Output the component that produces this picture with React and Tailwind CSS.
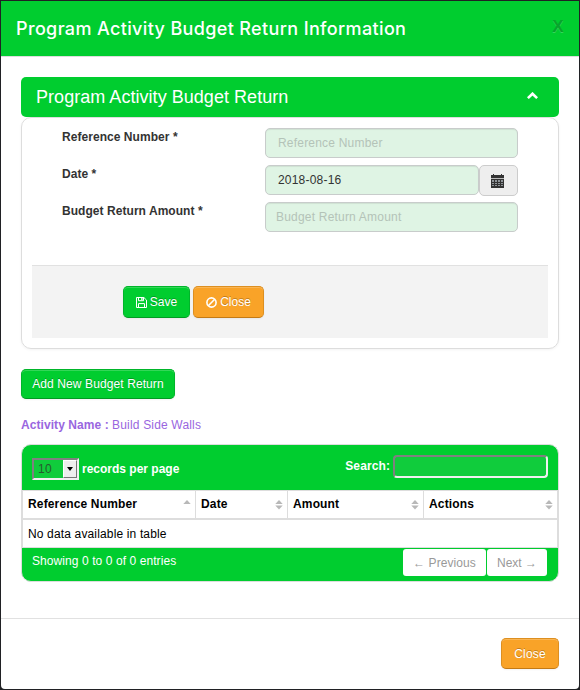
import React from "react";

const btn =
  "flex items-center justify-center rounded-[5px] border text-[12px] whitespace-nowrap text-white [text-shadow:0_-1px_0_rgba(0,0,0,0.25)] shadow-[inset_0_1px_0_rgba(255,255,255,0.2),0_1px_2px_rgba(0,0,0,0.05)]";
const green = "bg-[#00cd2f] border-[#00b52a] border-b-[#009a22]";
const orange = "bg-[#f9a328] border-[#dd8f20] border-b-[#c47a14]";
const field =
  "h-[30px] rounded-[5px] border border-[#c8cccb] bg-[#dff4e4] text-[12px] tracking-[0.2px] text-[#333] placeholder:text-[#b4c3b8] outline-none shadow-[inset_0_1px_1px_rgba(0,0,0,0.075)]";

function SaveIcon() {
  return (
    <svg className="mr-[3px] h-[11px] w-[11px]" viewBox="0 0 11 11" fill="none" stroke="currentColor">
      <path d="M.5 .5h7.4l2.6 2.6v7.4H.5z" />
      <path d="M2.5 .5v3.2h5V.5M2.5 10.5V6.6h6v3.9" />
      <path d="M5.9 1v2" strokeWidth="1.4" />
    </svg>
  );
}

function BanIcon() {
  return (
    <svg className="mr-[3px] h-[11px] w-[11px]" viewBox="0 0 11 11" fill="none" stroke="currentColor" strokeWidth="1.6">
      <circle cx="5.5" cy="5.5" r="4.6" />
      <path d="M2.3 8.7l6.4-6.4" />
    </svg>
  );
}

function CalendarIcon() {
  return (
    <svg className="mr-[2px] h-[14px] w-[13px]" viewBox="0 0 13 14" shapeRendering="crispEdges">
      <path fill="#333" d="M2 0h1v1h-1zM10 0h1v1h-1zM0 1h13v3H0z" />
      <path fill="#bbb" d="M0 4h13v1H0z" />
      <path fill="#333" d="M0 5h13v9H0z" />
      {[6, 9, 11].map((y, i) =>
        [1, 4, 7, 10].map((x) => (
          <rect key={`${x}-${y}`} x={x} y={y} width="2" height={i === 0 ? 2 : 1} fill="#8f9499" />
        ))
      )}
    </svg>
  );
}

function SortIcon({ up }) {
  return (
    <svg className="h-[10px] w-[8px] shrink-0" viewBox="0 0 8 10" fill="#b8b8b8">
      <path d="M4 0l3.7 4H.3z" />
      {!up && <path d="M.3 5.5h7.4L4 9.5z" />}
    </svg>
  );
}

function Row({ label, children }) {
  return (
    <div className="flex h-[37px]">
      <label className="w-[203px] pt-px text-[12px] leading-[16px] font-bold tracking-[0.05px] text-[#333]">{label}</label>
      {children}
    </div>
  );
}

function Head({ label, width, up, last }) {
  return (
    <div className={`flex items-center justify-between pl-[5px] ${width} ${last ? "pr-[4px]" : "border-r border-[#ddd] pr-[4px]"}`}>
      <span className="-mt-px tracking-[0.15px]">{label}</span>
      <SortIcon up={up} />
    </div>
  );
}

export default function App() {
  return (
    <div className="h-[690px] w-[580px] overflow-hidden border border-[#202124] bg-[#202124] font-['Liberation_Sans',Arial,sans-serif] text-[12px]">
      <div className="h-[688px] w-[578px] rounded-b-[4px] bg-white">
        <header className="flex h-[56px] justify-between border-b border-[#ddd] bg-[#00cd2f] pr-[15px] pl-[15px]">
          <h1 className="pt-[15px] font-['Inter',sans-serif] text-[18px] leading-[26px] font-medium tracking-[0.36px] whitespace-nowrap text-white">
            Program Activity Budget Return Information
          </h1>
          <button className="h-[20px] w-[12px] pt-[15px] text-center text-[17px] leading-[21px] font-bold text-[#07a52c] [text-shadow:0_1px_0_#33d65a]">
            X
          </button>
        </header>

        <main className="px-[20px] pt-[20px]">
          <div className="flex h-[40px] items-center justify-between rounded-[5px] bg-[#00cd2f] pr-[21px] pl-[15px]">
            <h2 className="text-[18px] tracking-[0.04px] whitespace-nowrap text-white">Program Activity Budget Return</h2>
            <svg className="mb-[4px] h-[7px] w-[11px]" viewBox="0 0 11 7" fill="none" stroke="white" strokeWidth="2.6">
              <path d="M.9 6.1l4.6-4.4 4.6 4.4" />
            </svg>
          </div>

          <section className="h-[232px] rounded-[10px] border border-[#ddd] px-[10px] pt-[10px] shadow-[0_1px_3px_rgba(0,0,0,0.05)]">
            <div className="h-[137px] pl-[30px]">
              <Row label="Reference Number *">
                <input className={`${field} w-[253px] px-[12px]`} placeholder="Reference Number" />
              </Row>
              <Row label="Date *">
                <input className={`${field} w-[214px] px-[12px]`} defaultValue="2018-08-16" />
                <span className="flex h-[31px] w-[39px] items-center justify-center rounded-[5px] border border-[#ccc] bg-[#eee]">
                  <CalendarIcon />
                </span>
              </Row>
              <Row label="Budget Return Amount *">
                <input className={`${field} w-[253px] px-[10px]`} placeholder="Budget Return Amount" />
              </Row>
            </div>
            <div className="flex h-[73px] gap-[3px] border-t border-[#e1e1e1] bg-[#f3f3f3] pt-[20px] pl-[91px]">
              <button className={`${btn} ${green} h-[32px] w-[67px]`}>
                <SaveIcon />
                Save
              </button>
              <button className={`${btn} ${orange} h-[32px] w-[71px]`}>
                <BanIcon />
                Close
              </button>
            </div>
          </section>

          <button className={`${btn} ${green} mt-[20px] h-[30px] w-[154px] tracking-[0.1px]`}>Add New Budget Return</button>

          <p className="mt-[17px] h-[28px] text-[12px] leading-[18px] text-[#9966e0]">
            <b className="tracking-[0.07px]">Activity Name :</b> <span className="tracking-[0.17px]">Build Side Walls</span>
          </p>

          <section className="h-[138px] overflow-hidden rounded-[10px] border border-[#ddd] bg-[#00cd2f] text-white">
            <div className="flex h-[45px] justify-between px-[10px] font-bold">
              <div className="flex gap-[3px] pt-[13px]">
                <div className="flex h-[22px] w-[47px] shrink-0 border-2 border-t-[#808080] border-r-[#f0f0f0] border-b-[#f0f0f0] border-l-[#808080] bg-[#10cc3c] font-normal text-[#26592f]">
                  <span className="w-[29px] pl-[4px] text-[12px] leading-[18px] tracking-[0.3px]">10</span>
                  <span className="flex w-[14px] items-center justify-center border border-t-white border-r-[#777] border-b-[#777] border-l-white bg-[#eee]">
                    <svg className="h-[4px] w-[6px]" viewBox="0 0 6 4">
                      <path d="M0 0h6L3 4z" />
                    </svg>
                  </span>
                </div>
                <span className="leading-[22px] whitespace-nowrap">records per page</span>
              </div>
              <div className="flex h-[23px] gap-[3px] pt-[10px]">
                <span className="leading-[22px] tracking-[0.1px]">Search:</span>
                <input className="h-[23px] w-[155px] rounded-[4px] border-2 border-t-[#808080] border-r-[#f0f0f0] border-b-[#f0f0f0] border-l-[#808080] bg-[#10cc3c] outline-none" />
              </div>
            </div>
            <div className="h-[58px] border-t border-r border-b border-l border-[#ddd] bg-white text-black">
              <div className="flex h-[29px] border-b-2 border-[#ddd] font-bold">
                <Head label="Reference Number" width="w-[173px]" up />
                <Head label="Date" width="w-[92px]" />
                <Head label="Amount" width="w-[136px]" />
                <Head label="Actions" width="w-[133px]" last />
              </div>
              <div className="pl-[5px] leading-[29px] tracking-[0.15px]">No data available in table</div>
            </div>
            <div className="flex justify-between pr-[11px] pl-[10px]">
              <span className="pt-[5px] leading-[16px] tracking-[0.08px]">Showing 0 to 0 of 0 entries</span>
              <div className="flex gap-px pt-px text-[#999]">
                <span className="flex h-[27px] w-[83px] items-center justify-center rounded-[3px] bg-white tracking-[0.08px] whitespace-nowrap">← Previous</span>
                <span className="flex h-[27px] w-[60px] items-center justify-center rounded-[3px] bg-white whitespace-nowrap">Next →</span>
              </div>
            </div>
          </section>
        </main>

        <footer className="mt-[36px] flex justify-end border-t border-[#e1e1e1] pt-[19px] pr-[20px]">
          <button className={`${btn} ${orange} h-[31px] w-[58px] tracking-[0.2px]`}>Close</button>
        </footer>
      </div>
    </div>
  );
}
